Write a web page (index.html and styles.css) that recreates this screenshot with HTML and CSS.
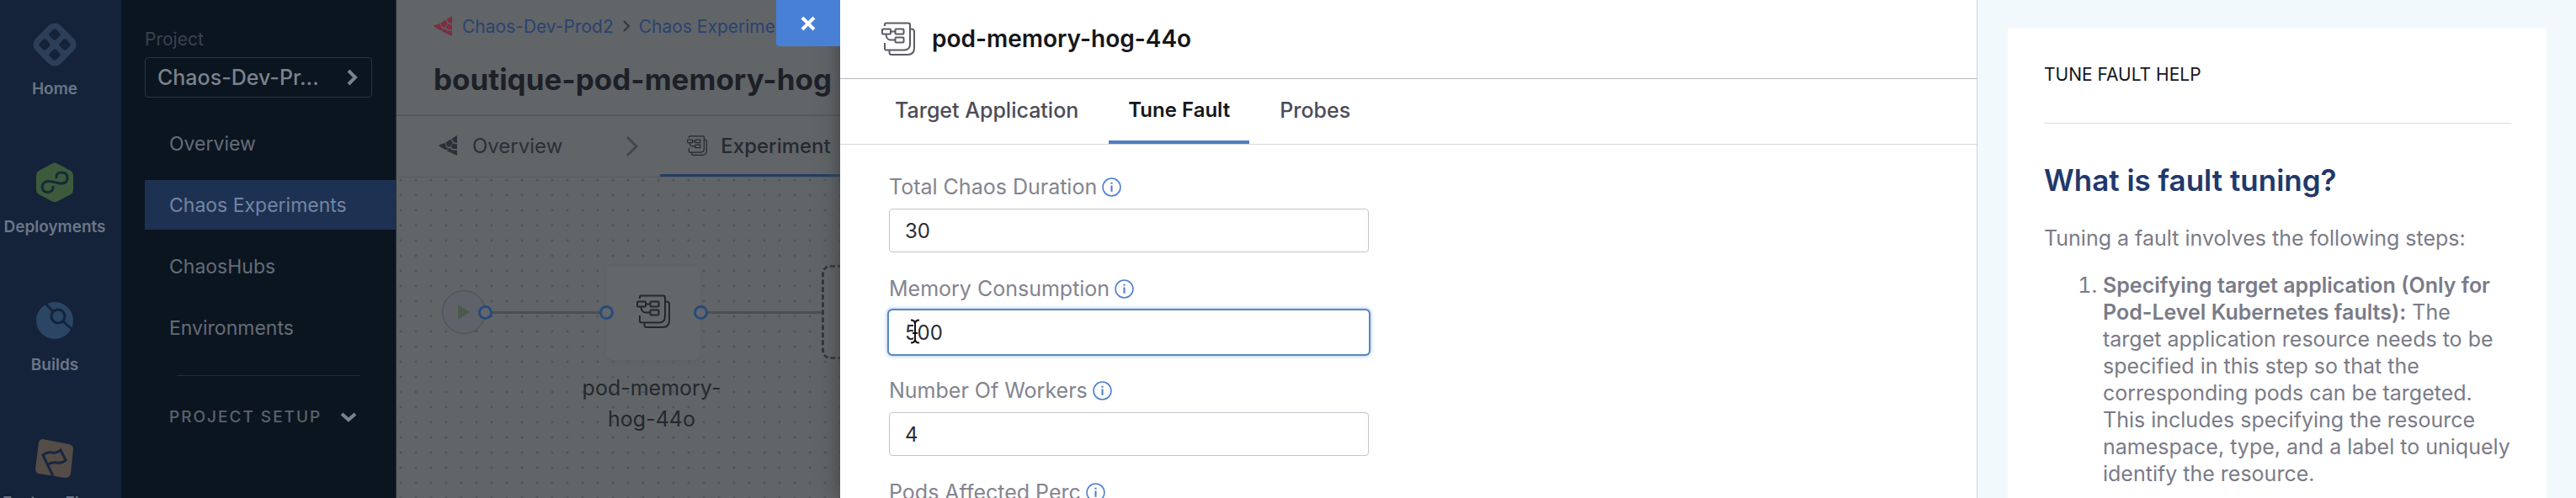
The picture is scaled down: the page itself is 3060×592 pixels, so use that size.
FILE: index.html
```html
<!DOCTYPE html>
<html lang="en">
<head>
<meta charset="utf-8">
<title>Chaos Experiments</title>
<link rel="stylesheet" href="styles.css">
</head>
<body>
<svg class="sprite" aria-hidden="true">
  <symbol id="fault" viewBox="0 0 40 40">
    <g fill="none" stroke="currentColor" stroke-width="2">
      <path d="M4 5V3Q4 1.500 5.500 1.500H32Q34 1.500 34 3.500V26Q34 33.500 27 33.500H6Q4 33.500 4 31.500V25"/>
      <path d="M35 8.500Q39 8.500 39 11.500V31Q39 39 31 39H12Q9.500 39 9.500 36V34"/>
      <rect x="1" y="8.500" width="10" height="6" rx="1"/>
      <rect x="16.500" y="8.500" width="10" height="6" rx="1"/>
      <rect x="16.500" y="18.500" width="10" height="6" rx="1"/>
      <path d="M11 11.500H16.500M5.500 14.500C5.500 19 8 21.500 11 21.500H16.500"/>
    </g>
  </symbol>
  <symbol id="chaos" viewBox="0 0 24 24">
    <path fill="currentColor" d="M22 0V9L18 8 15.500 4ZM14.500 4.500L17 9.500 13 14 10 12.500 8.500 8.500ZM7.500 9L9.500 14 13 16 8 17 1 13Q0 12 1 11ZM17.500 9.500L22 10.500V16H17L14.500 13.500ZM14 15L16 17.500H22V24L9.500 18Z"/>
  </symbol>
  <symbol id="info" viewBox="0 0 22 22">
    <circle cx="11" cy="11" r="10" fill="none" stroke="currentColor" stroke-width="1.500"/>
    <path fill="currentColor" d="M10 5.500h2v2h-2zM10 9h2v7h-2z"/>
  </symbol>
</svg>
<div class="app">
  <nav class="modules">
    <a class="module" href="#">
      <svg class="module-icon" viewBox="0 0 54 54"><g transform="rotate(45 27 27)"><rect x="6" y="6" width="42" height="42" rx="10" fill="#2d3f58"/><g fill="#14233a"><rect x="13" y="13" width="11" height="11" rx="3"/><rect x="30" y="13" width="11" height="11" rx="3"/><rect x="13" y="30" width="11" height="11" rx="3"/><rect x="30" y="30" width="11" height="11" rx="3"/></g></g></svg>
      <span>Home</span>
    </a>
    <a class="module" href="#">
      <svg class="module-icon" viewBox="0 0 54 54"><path d="M24 4.500Q27 2.500 30 4.500L46 13Q49 15 49 18V36Q49 39 46 41L30 49.500Q27 51 24 49.500L8 41Q5 39 5 36V18Q5 15 8 13Z" fill="#3d5a3d"/><path d="M29 22Q28 15 35 15Q42 15 42 21Q42 29 33 28Q29 27 24 26Q13 24 12 32Q13 39 19 38.500Q26 38 25 31" fill="none" stroke="#142b38" stroke-width="3"/></svg>
      <span>Deployments</span>
    </a>
    <a class="module" href="#">
      <svg class="module-icon" viewBox="0 0 54 54"><circle cx="27" cy="27" r="22" fill="#2a4664"/><g stroke="#14233a" stroke-width="3"><path d="M16 7L26 17M37 28L48 38"/><circle cx="31" cy="22" r="8" fill="#2a4664"/></g><path d="M50 36L38 51 54 54Z" fill="#14233a" opacity=".5"/></svg>
      <span>Builds</span>
    </a>
    <a class="module" href="#">
      <svg class="module-icon" viewBox="0 0 54 54"><path d="M13 4L44 10Q49 11 49 16L46 45Q45 50 39 50L8 45Q4 44 4 39L8 8Q9 4 13 4Z" fill="#544c46"/><path d="M25 48L13 23Q18 19 24 20Q30 21 34 17L40 29Q36 33 30 32Q24 31 19 34" fill="none" stroke="#182741" stroke-width="3"/></svg>
      <span>Feature Flags</span>
    </a>
  </nav>

  <aside class="side">
    <span class="side-caption">Project</span>
    <button class="project" type="button">Chaos-Dev-Pr...
      <svg class="chev" viewBox="0 0 14 20"><path d="M2 2L10 10L2 18" fill="none" stroke="currentColor" stroke-width="4"/></svg>
    </button>
    <ul class="menu">
      <li><a href="#">Overview</a></li>
      <li><a class="current" href="#">Chaos Experiments</a></li>
      <li><a href="#">ChaosHubs</a></li>
      <li><a href="#">Environments</a></li>
    </ul>
    <hr class="side-rule">
    <button class="setup" type="button">PROJECT SETUP
      <svg class="chev-down" viewBox="0 0 20 14"><path d="M2 3L10 10L18 3" fill="none" stroke="currentColor" stroke-width="4"/></svg>
    </button>
  </aside>

  <main class="main">
    <header class="main-head">
      <div class="crumbs">
        <svg class="logo" viewBox="0 0 24 24"><use href="#chaos"/></svg>
        <a href="#">Chaos-Dev-Prod2</a>
        <svg class="crumb-sep" viewBox="0 0 8 14"><path d="M1 1L7 7L1 13" fill="none" stroke="currentColor" stroke-width="2"/></svg>
        <a href="#">Chaos Experiments</a>
      </div>
      <h1>boutique-pod-memory-hog</h1>
    </header>
    <div class="steps">
      <a class="step" href="#"><svg class="logo" viewBox="0 0 24 24"><use href="#chaos"/></svg>Overview</a>
      <svg class="step-sep" viewBox="0 0 14 24"><path d="M1 1L12 12L1 23" fill="none" stroke="currentColor" stroke-width="3"/></svg>
      <a class="step active" href="#"><svg class="logo" viewBox="0 0 40 40"><use href="#fault"/></svg>Experiment</a>
    </div>
    <div class="canvas">
      <div class="wire first"></div>
      <div class="wire second"></div>
      <div class="start"><svg viewBox="0 0 14 18"><path d="M0 0L14 9L0 18Z" fill="#4d594f"/></svg></div>
      <div class="node"><svg viewBox="0 0 40 40"><use href="#fault"/></svg></div>
      <i class="port p1"></i><i class="port p2"></i><i class="port p3"></i>
      <div class="slot"></div>
      <div class="node-name">pod-memory-<br>hog-44o</div>
    </div>
  </main>

  <section class="drawer">
    <button class="close" type="button" aria-label="Close"><svg viewBox="0 0 18 18"><path d="M2 2L16 16M16 2L2 16" stroke="currentColor" stroke-width="4"/></svg></button>
    <div class="editor">
      <header class="editor-head">
        <svg class="editor-icon" viewBox="0 0 40 40"><use href="#fault"/></svg>
        <h2>pod-memory-hog-44o</h2>
      </header>
      <div class="tabs" role="tablist">
        <button class="tab" type="button" role="tab">Target Application</button>
        <button class="tab selected" type="button" role="tab" aria-selected="true">Tune Fault</button>
        <button class="tab" type="button" role="tab">Probes</button>
      </div>
      <form class="form">
        <div class="field">
          <label for="duration">Total Chaos Duration <svg viewBox="0 0 22 22"><use href="#info"/></svg></label>
          <input id="duration" type="text" value="30">
        </div>
        <div class="field">
          <label for="memory">Memory Consumption <svg viewBox="0 0 22 22"><use href="#info"/></svg></label>
          <input id="memory" class="focused" type="text" value="500">
          <svg class="cursor" viewBox="0 0 14 30"><path d="M2 1.500Q7 1.500 7 6Q7 1.500 12 1.500M7 5V25M2 28.500Q7 28.500 7 24Q7 28.500 12 28.500M4 17H10" fill="none" stroke="#fff" stroke-width="4"/><path d="M2 1.500Q7 1.500 7 6Q7 1.500 12 1.500M7 5V25M2 28.500Q7 28.500 7 24Q7 28.500 12 28.500M4 17H10" fill="none" stroke="#111" stroke-width="2"/></svg>
        </div>
        <div class="field">
          <label for="workers">Number Of Workers <svg viewBox="0 0 22 22"><use href="#info"/></svg></label>
          <input id="workers" type="text" value="4">
        </div>
        <div class="field">
          <label for="pods">Pods Affected Perc <svg viewBox="0 0 22 22"><use href="#info"/></svg></label>
          <input id="pods" type="text">
        </div>
      </form>
    </div>
    <aside class="help">
      <article class="help-card">
        <p class="help-caption">TUNE FAULT HELP</p>
        <h3>What is fault tuning?</h3>
        <p>Tuning a fault involves the following steps:</p>
        <ol>
          <li><strong>Specifying target application (Only for Pod-Level Kubernetes faults):</strong> The<br>target application resource needs to be specified in this step so that the corresponding pods can be targeted. This includes specifying the resource namespace, type, and a label to uniquely identify the resource.</li>
        </ol>
      </article>
    </aside>
  </section>
</div>
</body>
</html>
```
FILE: styles.css
```css
* { box-sizing: border-box; }
body { margin: 0; font-family: Inter, "Liberation Sans", sans-serif; font-size: 24px; overflow: hidden; }
a { color: inherit; text-decoration: none; }
button { font: inherit; color: inherit; background: none; border: 0; padding: 0; text-align: left; }
h1, h2, h3, p, ul, ol { margin: 0; padding: 0; }
svg { display: block; flex: none; }
.sprite { position: absolute; width: 0; height: 0; }

.app { display: flex; height: 100vh; overflow: hidden; }

/* module rail */
.modules { flex: 0 0 144px; background: #14233a; color: #6b7688; padding: 26px 14px 0 0; display: flex; flex-direction: column; gap: 72px; }
.module { display: flex; flex-direction: column; align-items: center; gap: 14px; font-size: 19px; line-height: 24px; font-weight: 600; white-space: nowrap; }
.module-icon { width: 54px; height: 54px; }

/* project menu */
.side { flex: 0 0 327px; background: #0b1520; color: #656c77; padding: 34px 0 0 28px; border-right: 1px solid #2c3040; display: flex; flex-direction: column; }
.side-caption { font-size: 21px; line-height: 26px; color: #3b424d; }
.project { display: flex; align-items: center; justify-content: space-between; height: 48px; margin: 8px 28px 0 0; padding: 0 15px 0 14px; border: 1px solid #2d3440; border-radius: 4px; color: #7c828b; font-size: 25px; font-weight: 500; }
.chev { width: 14px; height: 20px; }
.menu { list-style: none; margin-top: 25px; font-size: 23px; display: grid; gap: 14px; }
.menu a { display: flex; align-items: center; height: 59px; padding-left: 29px; }
.menu .current { background: #1d3252; color: #7684a0; }
.side-rule { width: 218px; height: 1px; margin: 27px 0 0 38px; border: 0; background: #222b37; }
.setup { display: flex; align-items: center; justify-content: space-between; margin: 36px 46px 0 29px; font-size: 19px; line-height: 26px; font-weight: 500; letter-spacing: 2px; color: #5b626d; }
.chev-down { width: 20px; height: 14px; color: #7c828b; }

/* dimmed page */
.main { flex: 0 1 527px; min-width: 0; background: #616568; overflow: hidden; display: flex; flex-direction: column; }
.main-head { height: 138px; flex: none; padding: 16px 0 0 44px; border-bottom: 2px solid #56595c; white-space: nowrap; }
.crumbs { display: flex; align-items: center; height: 30px; font-size: 21px; color: #2b426f; }
.crumbs .logo { color: #7a2f41; margin-right: 10px; }
.logo { width: 24px; height: 24px; }
.crumb-sep { width: 8px; height: 14px; margin: 0 11px; color: #33373c; }
.main h1 { font-size: 35px; line-height: 44px; font-weight: 700; color: #1d2027; margin-top: 26px; }
.steps { height: 73px; flex: none; display: flex; align-items: stretch; border-bottom: 1px solid #565a5d; white-space: nowrap; color: #2c2f36; }
.step { display: flex; align-items: center; gap: 16px; padding: 0 0 2px 50px; }
.step.active { flex: 1; border-bottom: 3px solid #243d66; padding: 1px 0 0 32px; font-weight: 500; color: #26292f; }
.step-sep { width: 14px; height: 24px; align-self: center; margin: 0 26px 0 76px; color: #43474c; }
.canvas { flex: 1; position: relative; background: radial-gradient(circle at 9px 9px, #505457 1px, transparent 2px) 14px -6px / 18px 18px; }
.wire { position: absolute; top: 159px; height: 3px; background: #4b4f54; }
.wire.first { left: 105px; width: 144px; }
.wire.second { left: 361px; width: 146px; }
.start { position: absolute; left: 54px; top: 134px; width: 52px; height: 52px; border-radius: 50%; border: 1px solid #4d4d5a; background: #606269; display: grid; place-items: center; }
.start svg { width: 14px; height: 18px; }
.node { position: absolute; left: 249px; top: 105px; width: 112px; height: 112px; border-radius: 8px; background: #636769; box-shadow: 0 2px 4px #5d6164; padding: 34px 36px; color: #24272d; }
.node svg { width: 40px; height: 40px; }
.port { position: absolute; top: 152px; width: 17px; height: 17px; border-radius: 50%; border: 3px solid #264a7c; background: #63676a; }
.p1 { left: 97px; }
.p2 { left: 241px; }
.p3 { left: 353px; }
.slot { position: absolute; left: 505px; top: 104px; width: 112px; height: 112px; border: 3px dashed #33373c; border-radius: 10px; background: #63676a; }
.node-name { position: absolute; left: 203px; top: 232px; width: 200px; text-align: center; font-size: 25px; line-height: 37px; color: #25282e; }

/* drawer */
.drawer { flex: 1; min-width: 0; position: relative; display: flex; background: #fff; box-shadow: 0 0 24px #3c3f42; font-size: 25px; }
.close { position: absolute; right: 100%; top: 0; width: 76px; height: 55px; background: #4880d6; color: #fff; border-radius: 0 0 0 4px; display: grid; place-items: center; }
.close svg { width: 18px; height: 18px; }
.editor { flex: 1; min-width: 0; }
.editor-head { height: 94px; display: flex; align-items: center; gap: 20px; padding: 0 0 2px 49px; border-bottom: 1px solid #b6b6bd; }
.editor-icon { width: 40px; height: 40px; color: #5a5b66; }
.editor h2 { font-size: 28px; line-height: 36px; font-weight: 600; color: #15161a; }
.tabs { display: flex; gap: 13px; height: 78px; padding-left: 42px; border-bottom: 1px solid #d5d6db; }
.tab { padding: 0 23px; border-bottom: 4px solid transparent; color: #4b4c57; font-weight: 500; }
.tab.selected { border-color: #4f7dc4; color: #16171b; font-size: 24px; font-weight: 600; }
.form { padding: 34px 0 0 58px; display: grid; gap: 27px; }
.field { position: relative; display: grid; gap: 10px; width: 570px; }
.field label { display: flex; align-items: center; gap: 6px; height: 32px; color: #83848f; }
.field label svg { width: 23px; height: 23px; color: #4d7fd0; }
.field input { height: 52px; width: 100%; border: 1px solid #c4c5cc; border-radius: 4px; padding: 0 18px; font: inherit; font-size: 24px; color: #2b2c33; background: #fff; outline: 0; }
.field .focused { border-color: #fff; box-shadow: 0 0 0 2px #5c86be, 0 0 4px 3px #b9d0ee; }
.cursor { position: absolute; left: 24px; top: 52px; width: 14px; height: 30px; }

/* help */
.help { flex: 0 0 712px; border-left: 1px solid #cfd2da; background: #f2f9fd; padding: 33px 35px 0 36px; overflow: hidden; }
.help-card { background: #fff; min-height: 100%; padding: 40px 42px 40px 43px; color: #7a7b88; line-height: 32px; }
.help-caption { font-size: 21px; color: #15161a; padding-bottom: 41px; border-bottom: 1px solid #d9dae0; }
.help h3 { font-size: 35px; line-height: 44px; font-weight: 600; color: #22386b; margin: 45px 0 31px; }
.help ol { margin: 24px -8px 0 0; padding-left: 70px; }
.help strong { font-weight: 600; }
```
